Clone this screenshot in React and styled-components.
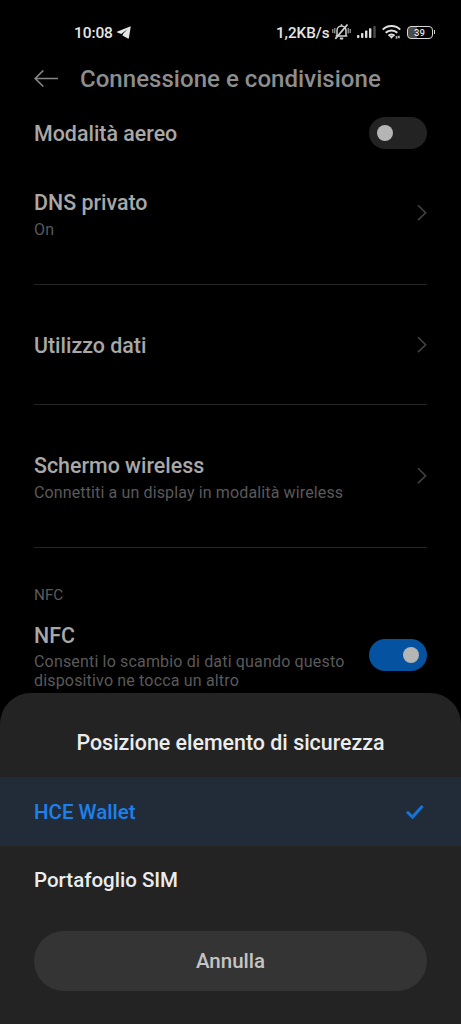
import React, { useState } from 'react';
import styled, { createGlobalStyle } from 'styled-components';

const GlobalStyle = createGlobalStyle`
  * {
    box-sizing: border-box;
  }

  body {
    margin: 0;
    background: #000;
    font-family: Roboto, sans-serif;
  }

  svg {
    display: block;
    flex: none;
  }
`;

const Screen = styled.div`
  position: relative;
  width: 461px;
  height: 1024px;
  overflow: hidden;
  background: #000;
`;

const StatusBar = styled.div`
  height: 56px;
  padding: 8px 26px 0 74px;
  display: flex;
  align-items: center;
  justify-content: space-between;
  color: #e6e6e6;
  font-size: 15.5px;
  font-weight: 500;
`;

const StatusGroup = styled.div`
  display: flex;
  align-items: center;
  gap: ${({ $gap }) => $gap || '0'};
`;

const Clock = styled.span`
  padding-top: 1px;
  font-size: 15.5px;
  letter-spacing: -0.1px;
`;

const Speed = styled.span`
  padding-top: 1px;
  font-size: 15.2px;
  margin-right: 2px;
`;

const Battery = styled.div`
  display: flex;
  align-items: center;
  gap: 1px;
  margin-left: 6px;

  &::after {
    content: '';
    width: 1.5px;
    height: 4px;
    background: #d8d8d8;
  }
`;

const BatteryBody = styled.div`
  width: 26px;
  height: 13px;
  border: 1.5px solid #d8d8d8;
  border-radius: 4px;
  background: linear-gradient(90deg, #4a4a4a 39%, #000 39%);
  font-size: 9.5px;
  line-height: 11px;
  text-align: center;
`;

const Header = styled.header`
  height: 46px;
  padding: 0 34px;
  display: flex;
  align-items: center;
  gap: 22px;
`;

const HeaderTitle = styled.h1`
  margin: 0;
  color: #8e8e8e;
  font-size: 24px;
  font-weight: 500;
  line-height: 28px;
  letter-spacing: 0.04px;
`;

const Section = styled.section`
  height: ${({ $height }) => $height};
  margin: 0 34px;
  border-bottom: ${({ $last }) => ($last ? 'none' : '1px solid #242424')};
`;

const Row = styled.div`
  height: ${({ $height }) => $height || '100%'};
  display: flex;
  align-items: center;
  justify-content: space-between;
`;

const RowLabel = styled.div`
  padding-top: 2px;
`;

const RowTitle = styled.div`
  padding-top: 1px;
  color: #a8a8a8;
  font-size: 21.4px;
  font-weight: 500;
  line-height: 26px;
`;

const RowText = styled.div`
  margin-top: ${({ $wide }) => ($wide ? '3px' : '4px')};
  color: #5a5a5a;
  font-size: 16px;
  line-height: 19px;
  letter-spacing: ${({ $wide }) => ($wide ? '0.17px' : '0.13px')};
  white-space: pre-line;
`;

const SectionLabel = styled.div`
  padding-top: 38px;
  height: 67px;
  color: #5a5a5a;
  font-size: 15.3px;
  line-height: 18px;
`;

const Track = styled.button`
  flex: none;
  width: 58px;
  height: 32px;
  margin-bottom: 1px;
  padding: 0 8px;
  border: 0;
  border-radius: 16px;
  display: flex;
  align-items: center;
  justify-content: ${({ $on }) => ($on ? 'flex-end' : 'flex-start')};
  background: ${({ $on }) => ($on ? '#0552a0' : '#232323')};
`;

const Knob = styled.span`
  width: 16px;
  height: 16px;
  border-radius: 50%;
  background: #b5b5b5;
`;

const Sheet = styled.div`
  position: absolute;
  left: 0;
  right: 0;
  bottom: 0;
  height: 331px;
  border-radius: 31px 31px 0 0;
  background: #232323;
`;

const SheetTitle = styled.h2`
  height: 84px;
  margin: 0;
  padding-top: 15px;
  display: flex;
  align-items: center;
  justify-content: center;
  color: #ececec;
  font-size: 21.4px;
  font-weight: 500;
`;

const Option = styled.div`
  height: ${({ $selected }) => ($selected ? '69px' : '68px')};
  padding: 0 36px 0 34px;
  display: flex;
  align-items: center;
  justify-content: space-between;
  color: ${({ $selected }) => ($selected ? '#1a82ef' : '#ececec')};
  background: ${({ $selected }) => ($selected ? '#222c39' : 'transparent')};
  font-size: 20.5px;
  font-weight: 500;
`;

const CancelButton = styled.button`
  display: block;
  width: 393px;
  height: 60px;
  margin: 16.5px 34px 0;
  padding: 1px 0 0;
  border: 0;
  border-radius: 30px;
  background: #343434;
  color: #c4c4c4;
  font-family: inherit;
  font-size: 20.5px;
  font-weight: 500;
`;

const PlaneIcon = () => (
  <svg width="14" height="13" viewBox="0 0 14 13" fill="#e6e6e6">
    <path d="M13.8.3.4 5.6C-.2 5.9-.1 6.4.4 6.6l3.8 1.4L10.8 3 6.3 7.6l-.9 1.9 5.5 2.9c.5.2.9 0 1-.5z" />
  </svg>
);

const MutedBellIcon = () => (
  <svg width="19" height="18" viewBox="0 0 19 18" fill="none" stroke="#d0d0d0" strokeWidth="1.5">
    <path d="M5 12.7V7.5a4.5 4.5 0 0 1 9 0v5.2M3.7 13h11.6M9.5 3V1.3" />
    <path d="M7.8 15.5h3.4" strokeWidth="2" />
    <path d="M15.5 1.5 3.3 15.8" strokeWidth="1.8" />
    <path d="M.8 6v4M2.8 5v5.5M16.2 5v5.5M18.2 6v4" strokeWidth="1.2" stroke="#a0a0a0" />
  </svg>
);

const SignalIcon = () => (
  <svg width="19" height="12" viewBox="0 0 19 12" fill="#dcdcdc">
    <rect x="0" y="9" width="2.4" height="3" rx=".7" />
    <rect x="4" y="7" width="2.4" height="5" rx=".7" />
    <rect x="8" y="4.6" width="2.4" height="7.4" rx=".7" />
    <rect x="12" y="2.3" width="2.4" height="9.7" rx=".7" />
    <rect x="16.3" y="0" width="2.4" height="12" rx=".7" fill="#4c4c4c" />
  </svg>
);

const WifiIcon = () => (
  <svg width="19" height="14" viewBox="0 0 19 14" fill="none" stroke="#e0e0e0" strokeWidth="2">
    <path d="M.8 4.6a12.3 12.3 0 0 1 17.4 0" />
    <path d="M3.7 7.8a8.2 8.2 0 0 1 11.6 0" />
    <path d="M6.5 10.8a4.3 4.3 0 0 1 6 0" />
    <path d="m7.2 11 2.3 2.8 2.3-2.8z" fill="#e0e0e0" stroke="none" />
    <path d="M14.6 13.7v-2.6M16.9 10.7v2.6" strokeWidth="1.8" stroke="#b0b0b0" />
  </svg>
);

const BackIcon = () => (
  <svg width="24" height="18" viewBox="0 0 24 18" fill="none" stroke="#858585" strokeWidth="1.7">
    <path d="M24 8.5H1.2M9.3.5 1.2 8.5l8.1 8" />
  </svg>
);

const ChevronIcon = () => (
  <svg width="10" height="18" viewBox="0 0 10 18" fill="none" stroke="#424242" strokeWidth="1.6">
    <path d="m1 1.3 7.6 7.4L1 16.1" />
  </svg>
);

const CheckIcon = () => (
  <svg width="20" height="16" viewBox="0 0 20 16" fill="none" stroke="#1674d4" strokeWidth="3">
    <path d="m2 7.7 5.5 5.4L17.6 1.9" />
  </svg>
);

const Toggle = ({ on, onClick, label }) => (
  <Track $on={on} onClick={onClick} role="switch" aria-checked={on} aria-label={label}>
    <Knob />
  </Track>
);

const LinkRow = ({ title, text, height }) => (
  <Row $height={height}>
    <RowLabel>
      <RowTitle>{title}</RowTitle>
      {text && <RowText>{text}</RowText>}
    </RowLabel>
    <ChevronIcon />
  </Row>
);

const options = ['HCE Wallet', 'Portafoglio SIM'];

const App = () => {
  const [airplane, setAirplane] = useState(false);
  const [nfc, setNfc] = useState(true);
  const [selected, setSelected] = useState('HCE Wallet');

  return (
    <>
      <GlobalStyle />
      <Screen>
        <StatusBar>
          <StatusGroup $gap="4px">
            <Clock>10:08</Clock>
            <PlaneIcon />
          </StatusGroup>
          <StatusGroup>
            <Speed>1,2KB/s</Speed>
            <StatusGroup $gap="6px">
              <MutedBellIcon />
              <SignalIcon />
              <WifiIcon />
            </StatusGroup>
            <Battery>
              <BatteryBody>39</BatteryBody>
            </Battery>
          </StatusGroup>
        </StatusBar>
        <Header>
          <BackIcon />
          <HeaderTitle>Connessione e condivisione</HeaderTitle>
        </Header>

        <Section $height="183px">
          <Row $height="63px">
            <RowTitle>Modalità aereo</RowTitle>
            <Toggle on={airplane} onClick={() => setAirplane(!airplane)} label="Modalità aereo" />
          </Row>
          <LinkRow title="DNS privato" text="On" height="96px" />
        </Section>
        <Section $height="120px">
          <LinkRow title="Utilizzo dati" />
        </Section>
        <Section $height="143px">
          <LinkRow title="Schermo wireless" text="Connettiti a un display in modalità wireless" />
        </Section>
        <Section $height="150px" $last>
          <SectionLabel>NFC</SectionLabel>
          <Row $height="80px">
            <RowLabel>
              <RowTitle>NFC</RowTitle>
              <RowText $wide>{'Consenti lo scambio di dati quando questo\ndispositivo ne tocca un altro'}</RowText>
            </RowLabel>
            <Toggle on={nfc} onClick={() => setNfc(!nfc)} label="NFC" />
          </Row>
        </Section>

        <Sheet>
          <SheetTitle>Posizione elemento di sicurezza</SheetTitle>
          {options.map((item) => (
            <Option key={item} $selected={item === selected} onClick={() => setSelected(item)}>
              {item}
              {item === selected && <CheckIcon />}
            </Option>
          ))}
          <CancelButton>Annulla</CancelButton>
        </Sheet>
      </Screen>
    </>
  );
};

export default App;
